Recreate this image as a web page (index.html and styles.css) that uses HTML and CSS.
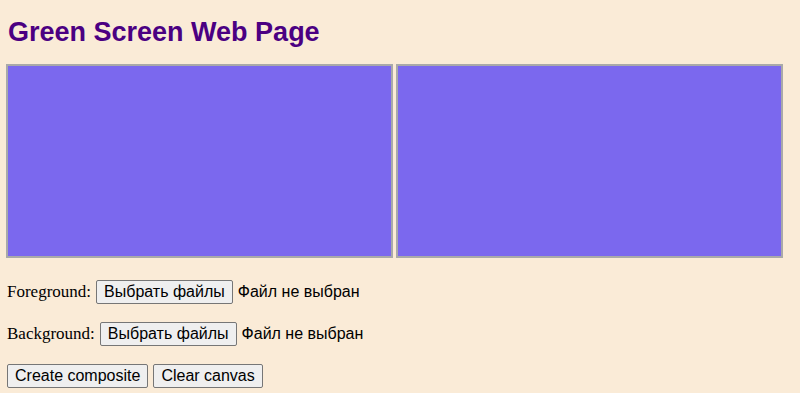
FILE: index.html
```html
<!DOCTYPE html>
<html lang="en">
<head>
  <meta charset="UTF-8">
  <title>Green Screen Web Page</title>
  <link rel="stylesheet" href="styles.css">
</head>
<body>

<h1 class="title">Green Screen Web Page</h1>

<!-- Холсты -->
<div class="canvas-row">
  <canvas class="canvas" id="can1" width="383" height="190"></canvas>
  <canvas class="canvas" id="can2" width="383" height="190"></canvas>
</div>

<p class="row">
  Foreground:
  <button class="btn">Выбрать файлы</button>
  <span class="file-name">Файл не выбран</span>
</p>

<p class="row">
  Background:
  <button class="btn">Выбрать файлы</button>
  <span class="file-name">Файл не выбран</span>
</p>

<p class="row">
  <button class="btn">Create composite</button>
  <button class="btn">Clear canvas</button>
</p>

</body>
</html>
```

FILE: styles.css
```css
body {
  margin: 6px;
  background-color: #faebd7;
  font-family: 'Liberation Serif', 'Times New Roman', serif;
  font-size: 17px;
  color: #000;
}

.title {
  font-family: 'Liberation Sans', Arial, sans-serif;
  font-size: 27px;
  color: #4b0082;
  margin: 11px 0 16px 2px;
}

.canvas-row {
  display: flex;
  gap: 3px;
  padding-bottom: 4px;
}

.canvas {
  width: 383px;
  height: 190px;
  background-color: #7b68ee;
  border: 2px solid #a9a9a9;
}

.row {
  margin: 18px 0 18px 1px;
  display: flex;
  align-items: center;
  gap: 5px;
  min-height: 24px;
}

.btn {
  font-family: 'Liberation Sans', Arial, sans-serif;
  font-size: 16px;
  color: #000;
  background: #efefef;
  border: 1px solid #767676;
  border-radius: 2px;
  padding: 2px 7px;
  height: 24px;
}

.file-name {
  font-family: 'Liberation Sans', Arial, sans-serif;
  font-size: 16px;
}
```
